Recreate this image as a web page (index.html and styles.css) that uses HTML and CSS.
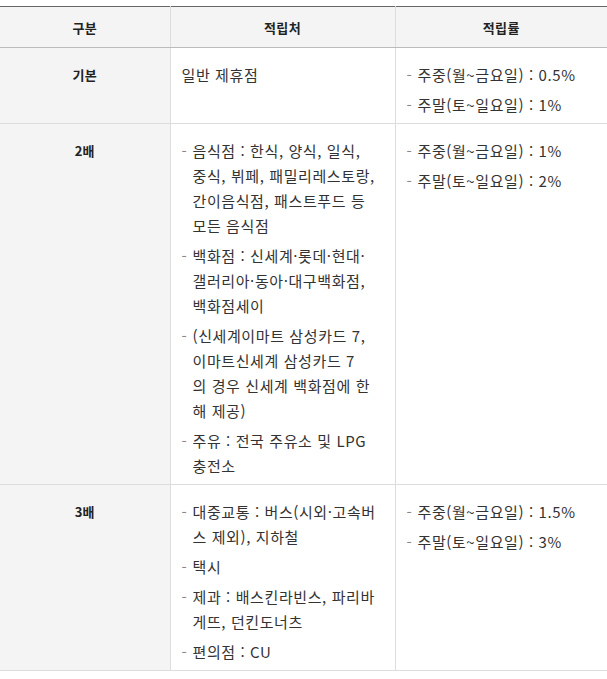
FILE: index.html
```html
<!DOCTYPE html>
<html lang="ko">
<head>
<meta charset="utf-8">
<link rel="stylesheet" href="styles.css">
</head>
<body>
<table class="rate-table">
  <colgroup>
    <col class="c1"><col class="c2"><col class="c3">
  </colgroup>
  <thead>
    <tr><th>구분</th><th>적립처</th><th>적립률</th></tr>
  </thead>
  <tbody>
    <tr>
      <th class="kind">기본</th>
      <td><p class="plain">일반 제휴점</p></td>
      <td>
        <ul class="dash">
          <li><span>주중(월~금요일) : 0.5%</span></li>
          <li><span>주말(토~일요일) : 1%</span></li>
        </ul>
      </td>
    </tr>
    <tr>
      <th class="kind">2배</th>
      <td>
        <ul class="dash">
          <li><span>음식점 : 한식, 양식, 일식,<br>중식, 뷔페, 패밀리레스토랑,<br>간이음식점, 패스트푸드 등<br>모든 음식점</span></li>
          <li><span>백화점 : 신세계·롯데·현대·<br>갤러리아·동아·대구백화점,<br>백화점세이</span></li>
          <li><span>(신세계이마트 삼성카드 7,<br>이마트신세계 삼성카드 7<br>의 경우 신세계 백화점에 한<br>해 제공)</span></li>
          <li><span>주유 : 전국 주유소 및 LPG<br>충전소</span></li>
        </ul>
      </td>
      <td>
        <ul class="dash">
          <li><span>주중(월~금요일) : 1%</span></li>
          <li><span>주말(토~일요일) : 2%</span></li>
        </ul>
      </td>
    </tr>
    <tr>
      <th class="kind">3배</th>
      <td>
        <ul class="dash">
          <li><span>대중교통 : 버스(시외·고속버<br>스 제외), 지하철</span></li>
          <li><span>택시</span></li>
          <li><span>제과 : 배스킨라빈스, 파리바<br>게뜨, 던킨도너츠</span></li>
          <li><span>편의점 : CU</span></li>
        </ul>
      </td>
      <td>
        <ul class="dash">
          <li><span>주중(월~금요일) : 1.5%</span></li>
          <li><span>주말(토~일요일) : 3%</span></li>
        </ul>
      </td>
    </tr>
  </tbody>
</table>
</body>
</html>
```
FILE: styles.css
```css
html, body {
  margin: 0;
  padding: 0;
  background: #fff;
}
body {
  padding-top: 6px;
  font-family: "Noto Sans CJK KR", "Noto Sans", sans-serif;
  font-size: 15px;
  letter-spacing: 0.6px;
  color: #333;
}
.rate-table {
  width: 607px;
  border-collapse: collapse;
  table-layout: fixed;
  border-top: 1px solid #666;
  border-bottom: 1px solid #ddd;
}
.c1 { width: 170px; }
.c2 { width: 225px; }
.c3 { width: 212px; }

.rate-table thead th {
  height: 40px;
  padding: 0;
  background: #f4f4f4;
  font-weight: bold;
  font-size: 13px;
  letter-spacing: 0.3px;
  color: #222;
  text-align: center;
  vertical-align: middle;
  border-bottom: 1px solid #bbb;
  border-left: 1px solid #ddd;
}
.rate-table thead th:first-child { border-left: none; }

.rate-table tbody tr + tr th,
.rate-table tbody tr + tr td {
  border-top: 1px solid #ddd;
}
.rate-table .kind {
  background: #f4f4f4;
  font-weight: bold;
  font-size: 13px;
  letter-spacing: 0.3px;
  color: #222;
  text-align: center;
  vertical-align: top;
  padding: 14px 0 6px;
  line-height: 25px;
}
.rate-table td {
  vertical-align: top;
  padding: 14px 6px 6px 11px;
  border-left: 1px solid #ddd;
  line-height: 25px;
}
.plain {
  margin: 0;
}
.dash {
  list-style: none;
  margin: 0;
  padding: 0;
}
.dash li {
  display: grid;
  grid-template-columns: 11px 1fr;
  white-space: nowrap;
}
.dash li + li {
  margin-top: 5px;
}
.dash li::before {
  content: "-";
  color: #888;
}
```
